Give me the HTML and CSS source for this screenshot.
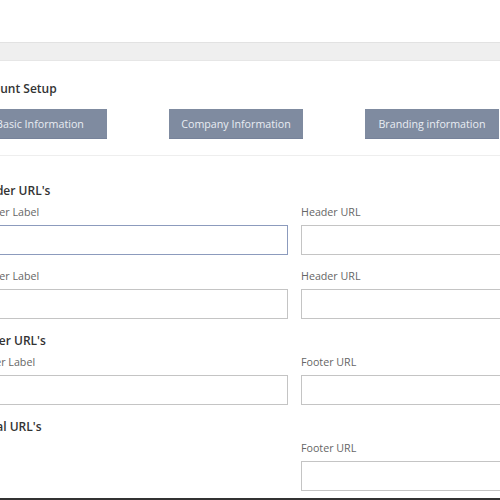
FILE: index.html
```html
<!DOCTYPE html>
<html lang="en">
<head>
<meta charset="UTF-8" />
<title>Account Setup</title>
<link rel="stylesheet" href="styles.css">
</head>
<body>

<div class="topbar"></div>
<div class="band"></div>

<div class="page">
  <div class="setup">
    <h1>Account Setup</h1>
    <div class="tabs">
      <button class="tab">Basic Information</button>
      <button class="tab">Company Information</button>
      <button class="tab">Branding information</button>
    </div>
  </div>

  <div class="form">
    <h2>Header URL's</h2>
    <div class="row">
      <div class="field">
        <label>Header Label</label>
        <input type="text" class="focused" />
      </div>
      <div class="field">
        <label>Header URL</label>
        <input type="text" />
      </div>
    </div>
    <div class="row">
      <div class="field">
        <label>Header Label</label>
        <input type="text" />
      </div>
      <div class="field">
        <label>Header URL</label>
        <input type="text" />
      </div>
    </div>

    <h2>Footer URL's</h2>
    <div class="row">
      <div class="field">
        <label>Footer Label</label>
        <input type="text" />
      </div>
      <div class="field">
        <label>Footer URL</label>
        <input type="text" />
      </div>
    </div>

    <h2>Social URL's</h2>
    <div class="row">
      <div class="field"></div>
      <div class="field">
        <label>Footer URL</label>
        <input type="text" />
      </div>
    </div>
  </div>
</div>

<div class="bottom-edge"></div>

</body>
</html>
```

FILE: styles.css
```css
/* whole page is Open Sans, cropped a little on the left */
body {
  font-family: "Open Sans", Arial, sans-serif;
  margin: 0;
  background: #fff;
  color: #333;
  overflow: hidden;
  height: 500px;
  position: relative;
}

.topbar {
  height: 42px;
  background: #fff;
}

.band {
  height: 17px;
  background: #efefef;
  border-top: 1px solid #e2e2e2;
  border-bottom: 1px solid #e6e6e6;
}

.page {
  margin-left: -27px;
  width: 700px;
}

.setup {
  padding: 20px 0 16px;
  border-bottom: 1px solid #eeeeee;
}

h1 {
  font-size: 12px;
  font-weight: 600;
  line-height: 16px;
  margin: 0 0 12px;
  color: #333;
}

.tabs {
  display: flex;
  gap: 62px;
}

.tab {
  width: 134px;
  height: 30px;
  background: #7f8ba0;
  color: #e9edf3;
  border: none;
  border-bottom: 1px solid #76829a;
  font-family: "Open Sans", Arial, sans-serif;
  font-size: 10.7px;
  padding: 0;
  cursor: pointer;
}

.form {
  padding-top: 26px;
}

h2 {
  font-size: 12px;
  font-weight: 600;
  line-height: 16px;
  margin: 1px 0 6px;
  color: #333;
}

.row {
  display: flex;
  gap: 13px;
  margin-bottom: 14px;
}

.field {
  width: 315px;
  display: flex;
  flex-direction: column;
}

label {
  font-size: 10.7px;
  line-height: 14px;
  color: #666;
  margin-bottom: 6px;
}

input {
  box-sizing: border-box;
  height: 30px;
  width: 100%;
  border: 1px solid #c4c4c4;
  background: #fff;
  margin: 0;
}

input.focused {
  border-color: #8c9bbd;
}

.bottom-edge {
  position: absolute;
  left: 0;
  right: 0;
  bottom: 0;
  height: 2px;
  background: #333;
}
```
